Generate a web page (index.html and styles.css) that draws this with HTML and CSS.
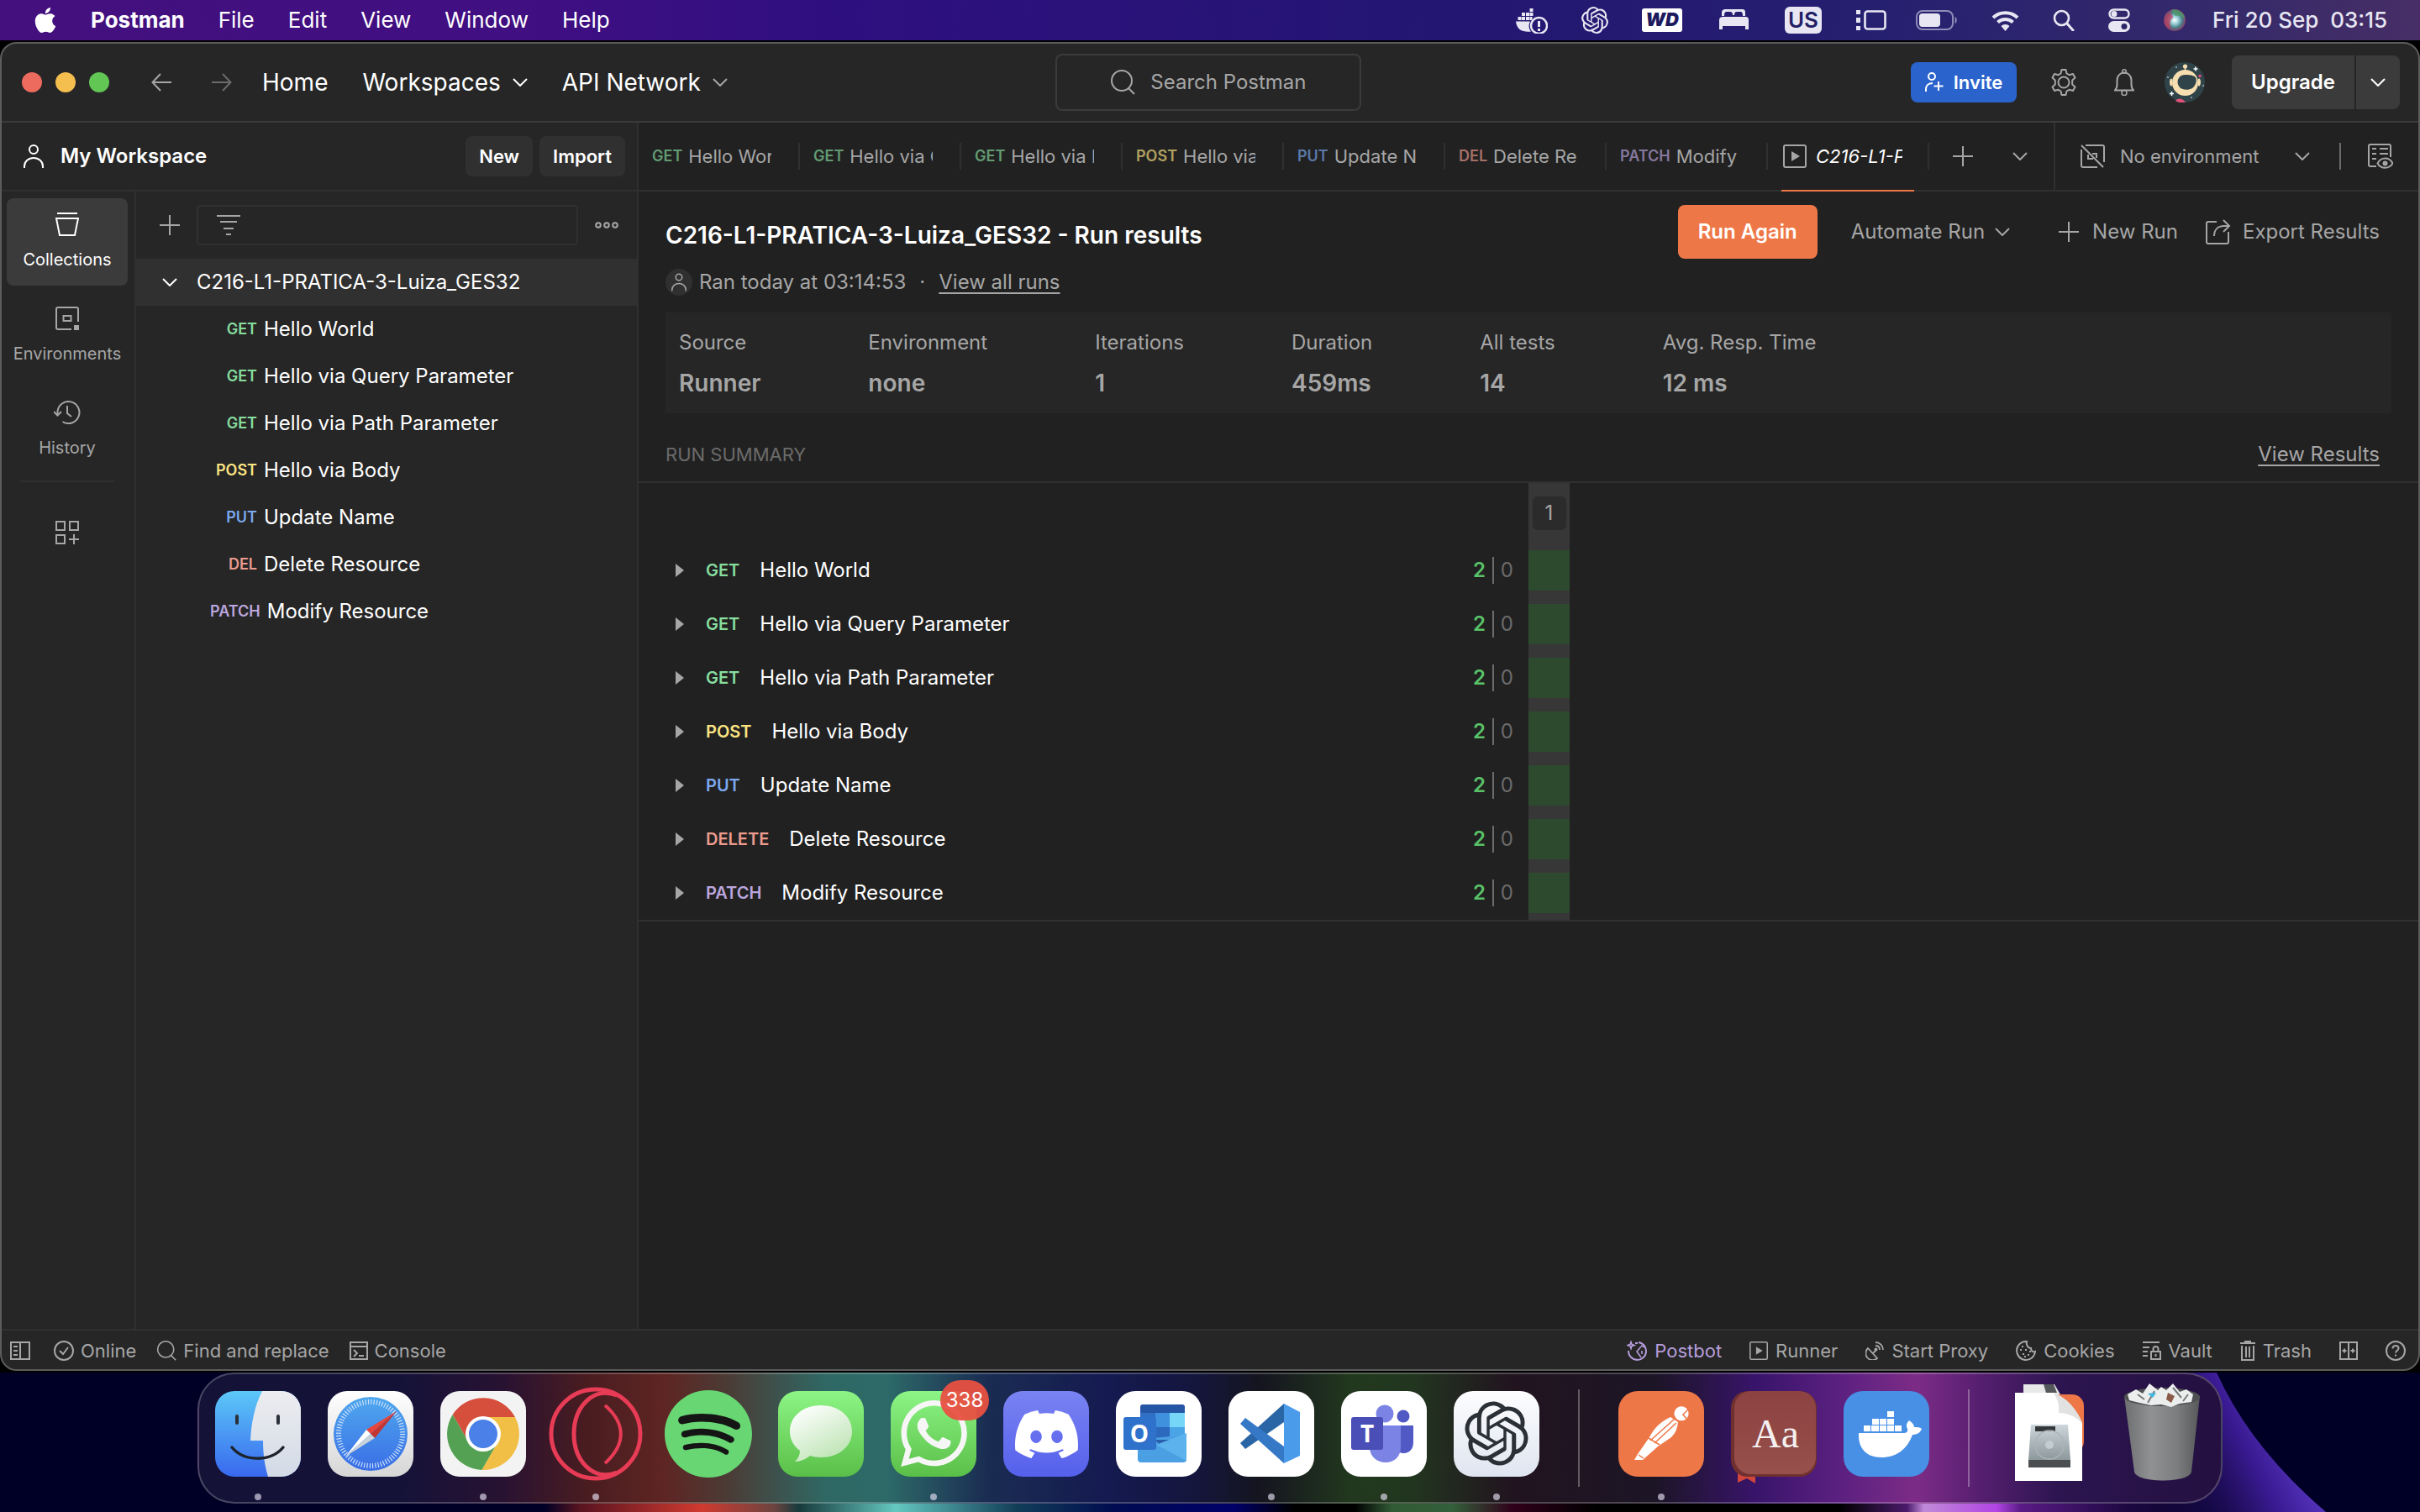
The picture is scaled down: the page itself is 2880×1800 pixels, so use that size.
FILE: index.html
```html
<!DOCTYPE html>
<html lang="en">
<head>
<meta charset="utf-8">
<title>Postman</title>
<link rel="stylesheet" href="styles.css">
</head>
<body>
<svg class="defs" aria-hidden="true">
  <defs>
    <symbol id="chevron" viewBox="0 0 18 10"><path d="M1 1l8 8 8-8" fill="none" stroke="currentColor" stroke-width="2"/></symbol>
    <symbol id="plus" viewBox="0 0 24 24"><path d="M12 0v24M0 12h24" fill="none" stroke="currentColor" stroke-width="2"/></symbol>
    <symbol id="person" viewBox="0 0 24 28"><circle cx="12" cy="6" r="5" fill="none" stroke="currentColor" stroke-width="2"/><path d="M1 28v-2c0-6 5-10 11-10s11 4 11 10v2" fill="none" stroke="currentColor" stroke-width="2"/></symbol>
    <symbol id="search" viewBox="0 0 30 30"><circle cx="14" cy="13" r="12" fill="none" stroke="currentColor" stroke-width="2"/><path d="M22 22l7 7" stroke="currentColor" stroke-width="2"/></symbol>
    <symbol id="play" viewBox="0 0 28 28"><rect x="1" y="1" width="26" height="26" rx="2" fill="none" stroke="currentColor" stroke-width="2"/><path d="M10 8l10 6-10 6z" fill="currentColor"/></symbol>
    <symbol id="openai" viewBox="0 0 24 24"><path fill="currentColor" d="M22.2819 9.8211a5.9847 5.9847 0 0 0-.5157-4.9108 6.0462 6.0462 0 0 0-6.5098-2.9A6.0651 6.0651 0 0 0 4.9807 4.1818a5.9847 5.9847 0 0 0-3.9977 2.9 6.0462 6.0462 0 0 0 .7427 7.0966 5.98 5.98 0 0 0 .511 4.9107 6.051 6.051 0 0 0 6.5146 2.9001A5.9847 5.9847 0 0 0 13.2599 24a6.0557 6.0557 0 0 0 5.7718-4.2058 5.9894 5.9894 0 0 0 3.9977-2.9001 6.0557 6.0557 0 0 0-.7475-7.0729zm-9.022 12.6081a4.4755 4.4755 0 0 1-2.8764-1.0408l.1419-.0804 4.7783-2.7582a.7948.7948 0 0 0 .3927-.6813v-6.7369l2.02 1.1686a.071.071 0 0 1 .038.052v5.5826a4.504 4.504 0 0 1-4.4945 4.4944zm-9.6607-4.1254a4.4708 4.4708 0 0 1-.5346-3.0137l.142.0852 4.783 2.7582a.7712.7712 0 0 0 .7806 0l5.8428-3.3685v2.3324a.0804.0804 0 0 1-.0332.0615L9.74 19.9502a4.4992 4.4992 0 0 1-6.1408-1.6464zM2.3408 7.8956a4.485 4.485 0 0 1 2.3655-1.9728V11.6a.7664.7664 0 0 0 .3879.6765l5.8144 3.3543-2.0201 1.1685a.0757.0757 0 0 1-.071 0l-4.8303-2.7865A4.504 4.504 0 0 1 2.3408 7.872zm16.5963 3.8558L13.1038 8.364 15.1192 7.2a.0757.0757 0 0 1 .071 0l4.8303 2.7913a4.4944 4.4944 0 0 1-.6765 8.1042v-5.6772a.79.79 0 0 0-.407-.667zm2.0107-3.0231l-.142-.0852-4.7735-2.7818a.7759.7759 0 0 0-.7854 0L9.409 9.2297V6.8974a.0662.0662 0 0 1 .0284-.0615l4.8303-2.7866a4.4992 4.4992 0 0 1 6.6802 4.66zM8.3065 12.863l-2.02-1.1638a.0804.0804 0 0 1-.038-.0567V6.0742a4.4992 4.4992 0 0 1 7.3757-3.4537l-.142.0805L8.704 5.459a.7948.7948 0 0 0-.3927.6813zm1.0976-2.3654l2.602-1.4998 2.6069 1.4998v2.9994l-2.5974 1.4997-2.6067-1.4997Z"/></symbol>
    <linearGradient id="g-finder" x2="0" y2="1"><stop stop-color="#5cc8f8"/><stop offset="1" stop-color="#3868ee"/></linearGradient>
    <linearGradient id="g-face" x2="0" y2="1"><stop stop-color="#ededf0"/><stop offset="1" stop-color="#d2dae6"/></linearGradient>
    <linearGradient id="g-white" x2="0" y2="1"><stop stop-color="#ffffff"/><stop offset="1" stop-color="#d6d6d6"/></linearGradient>
    <linearGradient id="g-blue" x2="0" y2="1"><stop stop-color="#4fa8ee"/><stop offset="1" stop-color="#3a6ee6"/></linearGradient>
    <linearGradient id="g-green" x2="0" y2="1"><stop stop-color="#8cf585"/><stop offset="1" stop-color="#5abf48"/></linearGradient>
    <linearGradient id="g-bubble" x1="0.2" x2="0.8" y2="1"><stop stop-color="#ffffff"/><stop offset="1" stop-color="#b9e2af"/></linearGradient>
    <linearGradient id="g-discord" x2="0" y2="1"><stop stop-color="#7a83f2"/><stop offset="1" stop-color="#5560ec"/></linearGradient>
    <linearGradient id="g-gpt" x2="0" y2="1"><stop stop-color="#fdfdfe"/><stop offset="1" stop-color="#dfe5f0"/></linearGradient>
    <linearGradient id="g-dict" x2="0" y2="1"><stop stop-color="#8c4241"/><stop offset="1" stop-color="#97504b"/></linearGradient>
    <linearGradient id="g-bin"><stop stop-color="#6c6e70"/><stop offset="0.35" stop-color="#8f9193"/><stop offset="0.7" stop-color="#7b7d7f"/><stop offset="1" stop-color="#56585a"/></linearGradient>
    <linearGradient id="g-disk" x2="0" y2="1"><stop stop-color="#cdd6da"/><stop offset="1" stop-color="#8d989c"/></linearGradient>
    <linearGradient id="g-edge" gradientUnits="userSpaceOnUse" x1="2520" y1="100" x2="2700" y2="10"><stop stop-color="#150838" stop-opacity="0"/><stop offset="0.7" stop-color="#3a1a92"/><stop offset="1" stop-color="#5a38c4"/></linearGradient>
    <radialGradient id="g-siri"><stop stop-color="#ffffff"/><stop offset="0.35" stop-color="#9ad0d8"/><stop offset="0.7" stop-color="#4a7f88"/><stop offset="1" stop-color="#8a3c6a"/></radialGradient>
  </defs>
</svg>

<header class="menubar">
  <nav class="menus" aria-label="Application menu">
    <svg class="apple" width="28" height="30" viewBox="1 0 22 24"><path fill="#fff" d="M12.152 6.896c-.948 0-2.415-1.078-3.96-1.04-2.04.027-3.91 1.183-4.961 3.014-2.117 3.675-.546 9.103 1.519 12.09 1.013 1.454 2.208 3.09 3.792 3.039 1.52-.065 2.09-.987 3.935-.987 1.831 0 2.35.987 3.96.948 1.637-.026 2.676-1.48 3.676-2.948 1.156-1.688 1.636-3.325 1.662-3.415-.039-.013-3.182-1.221-3.22-4.857-.026-3.04 2.48-4.494 2.597-4.559-1.429-2.09-3.623-2.324-4.39-2.376-2-.156-3.675 1.09-4.61 1.09zM15.53 3.83c.843-1.012 1.4-2.427 1.245-3.83-1.207.052-2.662.805-3.532 1.818-.78.896-1.454 2.338-1.273 3.714 1.338.104 2.715-.688 3.559-1.701"/></svg>
    <button class="menu menu-app">Postman</button>
    <button class="menu">File</button>
    <button class="menu">Edit</button>
    <button class="menu">View</button>
    <button class="menu">Window</button>
    <button class="menu">Help</button>
  </nav>
  <div class="status">
    <svg width="38" height="32" viewBox="0 0 38 32"><g fill="#e8e6f2"><path d="M16.500 2h4v4h-4zM7 7h4v4H7zM12 7h4v4h-4zM16.500 7h4v4h-4zM2.500 12h4v4h-4zM7 12h4v4H7zM12 12h4v4h-4zM16.500 12h3v4h-3zM0 17.500h17c-2 4-2 8 1 12-10 1-17-2-18-12z"/></g><circle cx="27.500" cy="22.500" r="9.500" fill="none" stroke="#e8e6f2" stroke-width="2.400"/><path d="M27.500 17v7M27.500 26v3" stroke="#e8e6f2" stroke-width="3"/></svg>
    <svg class="light" width="32" height="32"><use href="#openai"/></svg>
    <svg width="48" height="28" viewBox="0 0 48 28"><rect width="48" height="28" rx="3" fill="#fff"/><text x="24" y="21" text-anchor="middle" class="wd">WD</text></svg>
    <svg width="42" height="28" viewBox="-4 0 42 28"><path fill="#e8e6f2" d="M3 9V5c0-3 2-4 4-4h20c3 0 4 1 4 4v4h-3c0-4-1-5-3-5h-4c-2 0-3 1-3 4h-2c0-3-1-4-3-4H9C7 4 6 5 6 9zM0 25V14c0-3 2-4 4-4h27c3 0 4 1 4 4v11h-4v-4H4v4z"/></svg>
    <span class="input-source">US</span>
    <svg class="spill" width="32" height="24" viewBox="0 0 32 24"><path fill="#e8e6f2" d="M1 0h5v5H1zM1 9h5v6H1zM1 19h5v5H1z"/><rect x="11.500" y="1.500" width="24" height="21" rx="3" fill="none" stroke="#e8e6f2" stroke-width="2.600"/></svg>
    <svg width="50" height="24" viewBox="0 0 50 24"><rect x="1" y="1" width="43" height="22" rx="7" fill="none" stroke="#8f8bb8" stroke-width="2"/><rect x="4" y="4" width="25" height="16" rx="4" fill="#e8e6f2"/><path d="M46.500 8c3 1 3 7 0 8z" fill="#8f8bb8"/></svg>
    <svg width="33" height="25" viewBox="0 0 33 25"><path d="M2 9a21 21 0 0 1 29 0M7.500 14.500a13 13 0 0 1 18 0" fill="none" stroke="#e8e6f2" stroke-width="4"/><path d="M11.500 19a7 7 0 0 1 10 0l-5 6z" fill="#e8e6f2"/></svg>
    <svg width="26" height="26" viewBox="0 0 26 26"><circle cx="10.500" cy="10.500" r="8.500" fill="none" stroke="#e8e6f2" stroke-width="2.600"/><path d="M17 17l7 8" stroke="#e8e6f2" stroke-width="3" stroke-linecap="round"/></svg>
    <svg width="26" height="28" viewBox="0 0 26 28"><rect x="1.500" y="1.500" width="23" height="10" rx="5" fill="none" stroke="#e8e6f2" stroke-width="2.400"/><circle cx="7" cy="6.500" r="3.500" fill="#e8e6f2"/><rect y="15" width="26" height="13" rx="6.500" fill="#e8e6f2"/><circle cx="19" cy="21.500" r="3.500" fill="#2b2568"/></svg>
    <svg width="26" height="28" viewBox="0 0 26 28"><circle cx="13" cy="14" r="13" fill="url(#g-siri)"/><path d="M1 14c2-9 8-12 10-3-4 3-4 8-2 13C3 23 0 19 1 14z" fill="#c8365c" opacity=".7"/><path d="M9 2c8-3 16 4 16 10-4-3-8-4-11-3z" fill="#4c9a68" opacity=".8"/></svg>
    <time class="clock">Fri 20 Sep&nbsp; 03:15</time>
  </div>
</header>

<div class="window">
  <header class="titlebar">
    <div class="lights"><span class="light-close"></span><span class="light-min"></span><span class="light-max"></span></div>
    <button class="icon-btn back" aria-label="Back"><svg width="24" height="22" viewBox="0 0 24 22"><path d="M24 11H2M11 1L1.500 11l9.500 10" fill="none" stroke="currentColor" stroke-width="2"/></svg></button>
    <button class="icon-btn forward" aria-label="Forward"><svg width="24" height="22" viewBox="0 0 24 22"><path d="M0 11h22M13 1l9.500 10L13 21" fill="none" stroke="currentColor" stroke-width="2"/></svg></button>
    <nav class="topnav">
      <button>Home</button>
      <button>Workspaces <svg width="18" height="10"><use href="#chevron"/></svg></button>
      <button>API Network <svg class="muted" width="18" height="10"><use href="#chevron"/></svg></button>
    </nav>
    <div class="search-slot"><button class="search"><svg width="30" height="30"><use href="#search"/></svg>Search Postman</button></div>
    <div class="account">
      <button class="invite"><svg width="22" height="24" viewBox="0 0 22 24"><circle cx="8" cy="5" r="4" fill="none" stroke="#fff" stroke-width="2"/><path d="M1 23v-3c0-4 3-7 8-7M16 11v11M10.500 16.500h11" fill="none" stroke="#fff" stroke-width="2"/></svg>Invite</button>
      <button class="icon-btn gear" aria-label="Settings"><svg width="32" height="32" viewBox="0 0 32 32"><path d="M13.500 1h5l1 4.500 3 1.700L27 6l2.500 4.500-3.300 3v5l3.300 3L27 26l-4.500-1.200-3 1.700-1 4.500h-5l-1-4.500-3-1.700L5 26l-2.500-4.500 3.300-3v-5l-3.300-3L5 6l4.500 1.200 3-1.700z" fill="none" stroke="currentColor" stroke-width="2" stroke-linejoin="round"/><circle cx="16" cy="16" r="6.500" fill="none" stroke="currentColor" stroke-width="2"/></svg></button>
      <button class="icon-btn bell" aria-label="Notifications"><svg width="24" height="32" viewBox="0 0 24 32"><path d="M1 25.500c2-2 2.500-4 2.500-7v-5c0-5 3.500-9 8.500-9s8.500 4 8.500 9v5c0 3 .5 5 2.500 7z" fill="none" stroke="currentColor" stroke-width="2"/><circle cx="12" cy="3" r="2.200" fill="none" stroke="currentColor" stroke-width="1.600"/><circle cx="12" cy="28.500" r="3" fill="none" stroke="currentColor" stroke-width="1.600"/></svg></button>
      <svg class="avatar" width="48" height="48" viewBox="0 0 48 48"><circle cx="24" cy="24" r="24" fill="#2f4348"/><circle cx="24.500" cy="5" r="2.600" fill="#f7deb0"/><path d="M24.500 5v6" stroke="#f7deb0" stroke-width="1.500"/><circle cx="24.500" cy="24.500" r="15.500" fill="#f7deb0"/><path d="M8 20q-2 4 0 8zM41 20q2 4 0 8z" fill="#f7deb0" stroke="#f7deb0" stroke-width="2"/><path d="M20 16c5-2 14-1 17 2 2 4 0 10-4 13-5 3-12 2-15-1-4-5-3-11 2-14z" fill="#2f4348"/><path d="M13 46c3-4 9-3 12 2-5 1-9 0-12-2z" fill="#e0527a"/><circle cx="42" cy="16.500" r="1.700" fill="#e0527a"/><path d="M37 5.500v5M34.500 8h5M8.500 35v5M6 37.500h5" stroke="#fff" stroke-width="1.600"/><circle cx="14" cy="6" r="1" fill="#9fb0b4"/><circle cx="4" cy="18" r=".8" fill="#fff"/><circle cx="46" cy="28" r=".8" fill="#fff"/><circle cx="32" cy="42" r=".8" fill="#fff"/></svg>
      <div class="upgrade"><button>Upgrade</button><button class="upgrade-more" aria-label="Upgrade options"><svg width="18" height="10"><use href="#chevron"/></svg></button></div>
    </div>
  </header>

  <div class="workarea">
    <aside class="sidebar">
      <div class="workspace">
        <svg width="24" height="28"><use href="#person"/></svg>
        <h2>My Workspace</h2>
        <button class="small-btn">New</button>
        <button class="small-btn">Import</button>
      </div>
      <div class="side-body">
        <nav class="rail">
          <button class="rail-item active"><svg width="28" height="28" viewBox="0 0 28 28"><path d="M2 1h24" stroke="currentColor" stroke-width="2"/><path d="M1 7h26l-4 20H5z" fill="none" stroke="currentColor" stroke-width="2"/></svg>Collections</button>
          <button class="rail-item"><svg width="28" height="28" viewBox="0 0 28 28"><path d="M19 27H3a2 2 0 0 1-2-2V3a2 2 0 0 1 2-2h22a2 2 0 0 1 2 2v15" fill="none" stroke="currentColor" stroke-width="2"/><rect x="9.500" y="11" width="9" height="6" fill="none" stroke="currentColor" stroke-width="2"/><path d="M22 22h6v6h-6z" fill="currentColor"/></svg>Environments</button>
          <button class="rail-item"><svg width="32" height="28" viewBox="0 0 32 28"><path d="M4.500 17V13a13 13 0 1 1 6 12" fill="none" stroke="currentColor" stroke-width="2"/><path d="M0 13l4.500 4.500L9 13M16 6v9l5 4" fill="none" stroke="currentColor" stroke-width="2"/></svg>History</button>
          <hr>
          <button class="rail-more" aria-label="Configure sidebar"><svg width="28" height="28" viewBox="0 0 28 28"><path d="M1 1h10v10H1zM17 1h10v10H17zM1 17h10v10H1zM22 16v12M16 22h12" fill="none" stroke="currentColor" stroke-width="2"/></svg></button>
        </nav>
        <section class="collections">
          <div class="filter-row">
            <button class="icon-btn" aria-label="Create collection"><svg width="24" height="24"><use href="#plus"/></svg></button>
            <label class="filter"><svg width="28" height="24" viewBox="0 0 28 24"><path d="M0 1h28M4 8h20M8 16h12M11 23h6" stroke="currentColor" stroke-width="2"/></svg><input type="text" aria-label="Filter collections"></label>
            <button class="icon-btn" aria-label="More actions"><svg width="28" height="8" viewBox="0 0 28 8"><g fill="none" stroke="currentColor" stroke-width="2"><circle cx="4" cy="4" r="2.800"/><circle cx="14" cy="4" r="2.800"/><circle cx="24" cy="4" r="2.800"/></g></svg></button>
          </div>
          <button class="tree-root"><svg width="18" height="10"><use href="#chevron"/></svg>C216-L1-PRATICA-3-Luiza_GES32</button>
          <ul class="tree">
            <li><button><span class="method get">GET</span>Hello World</button></li>
            <li><button><span class="method get">GET</span>Hello via Query Parameter</button></li>
            <li><button><span class="method get">GET</span>Hello via Path Parameter</button></li>
            <li><button><span class="method post">POST</span>Hello via Body</button></li>
            <li><button><span class="method put">PUT</span>Update Name</button></li>
            <li><button><span class="method del">DEL</span>Delete Resource</button></li>
            <li><button><span class="method patch">PATCH</span>Modify Resource</button></li>
          </ul>
        </section>
      </div>
    </aside>

    <main class="main">
      <div class="tabbar">
        <div class="tabs">
          <button class="tab"><span><b class="method get">GET</b>Hello Wor</span></button>
          <button class="tab"><span><b class="method get">GET</b>Hello via Q</span></button>
          <button class="tab"><span><b class="method get">GET</b>Hello via P</span></button>
          <button class="tab"><span><b class="method post">POST</b>Hello via</span></button>
          <button class="tab"><span><b class="method put">PUT</b>Update N</span></button>
          <button class="tab"><span><b class="method del">DEL</b>Delete Re</span></button>
          <button class="tab"><span><b class="method patch">PATCH</b>Modify</span></button>
          <button class="tab current"><span><svg width="28" height="28"><use href="#play"/></svg><i>C216-L1-P</i></span></button>
        </div>
        <button class="icon-btn tab-add" aria-label="New tab"><svg width="24" height="24"><use href="#plus"/></svg></button>
        <button class="icon-btn tab-list" aria-label="Tab list"><svg width="18" height="10"><use href="#chevron"/></svg></button>
        <div class="environment">
          <button class="env-select"><svg width="30" height="28" viewBox="0 0 30 28"><path d="M6 1h20a2 2 0 0 1 2 2v18M20 27H3a2 2 0 0 1-2-2V6" fill="none" stroke="currentColor" stroke-width="2"/><path d="M1 1l26 26M14 11h5v5M9 12v5h6" fill="none" stroke="currentColor" stroke-width="2"/></svg><span>No environment</span><svg width="18" height="10"><use href="#chevron"/></svg></button>
          <button class="icon-btn env-view" aria-label="Environment quick look"><svg width="30" height="30" viewBox="0 0 30 30"><path d="M10 27H3a2 2 0 0 1-2-2V3a2 2 0 0 1 2-2h22a2 2 0 0 1 2 2v13M5 6h5M14 6h10M5 12h5M14 12h10M5 18h5" fill="none" stroke="currentColor" stroke-width="2"/><path d="M11.500 23.500c4-8 14-8 18 0-4 7-14 7-18 0z" fill="none" stroke="currentColor" stroke-width="2"/><circle cx="20.500" cy="23.500" r="3" fill="currentColor"/></svg></button>
        </div>
      </div>

      <section class="results">
        <div class="results-head">
          <h1>C216-L1-PRATICA-3-Luiza_GES32 - Run results</h1>
          <button class="run-again">Run Again</button>
          <button class="text-btn automate">Automate Run <svg width="18" height="10"><use href="#chevron"/></svg></button>
          <button class="text-btn new-run"><svg width="24" height="24"><use href="#plus"/></svg>New Run</button>
          <button class="text-btn export"><svg width="30" height="30" viewBox="0 0 30 30"><path d="M13 3H3a2 2 0 0 0-2 2v22a2 2 0 0 0 2 2h22a2 2 0 0 0 2-2V15" fill="none" stroke="currentColor" stroke-width="2"/><path d="M10 20c0-7 4-12 12-12h6M21 1l7 7-7 7" fill="none" stroke="currentColor" stroke-width="2"/></svg>Export Results</button>
        </div>
        <p class="ran"><span class="ran-avatar"><svg width="18" height="22"><use href="#person"/></svg></span>Ran today at 03:14:53<span class="dot">·</span><a href="#runs">View all runs</a></p>
        <dl class="metrics">
          <div><dt>Source</dt><dd>Runner</dd></div>
          <div><dt>Environment</dt><dd>none</dd></div>
          <div><dt>Iterations</dt><dd>1</dd></div>
          <div><dt>Duration</dt><dd>459ms</dd></div>
          <div><dt>All tests</dt><dd>14</dd></div>
          <div><dt>Avg. Resp. Time</dt><dd>12 ms</dd></div>
        </dl>
        <div class="summary-head"><h3>RUN SUMMARY</h3><a href="#results">View Results</a></div>
        <table class="summary">
          <thead><tr><td></td><th class="iter" scope="col"><span>1</span></th><td></td></tr></thead>
          <tbody>
            <tr><td><div class="request"><i class="caret"></i><b class="get">GET</b>Hello World<span class="pass">2</span><span class="fail">0</span></div></td><td class="iter"><div class="ok"></div></td><td></td></tr>
            <tr><td><div class="request"><i class="caret"></i><b class="get">GET</b>Hello via Query Parameter<span class="pass">2</span><span class="fail">0</span></div></td><td class="iter"><div class="ok"></div></td><td></td></tr>
            <tr><td><div class="request"><i class="caret"></i><b class="get">GET</b>Hello via Path Parameter<span class="pass">2</span><span class="fail">0</span></div></td><td class="iter"><div class="ok"></div></td><td></td></tr>
            <tr><td><div class="request"><i class="caret"></i><b class="post">POST</b>Hello via Body<span class="pass">2</span><span class="fail">0</span></div></td><td class="iter"><div class="ok"></div></td><td></td></tr>
            <tr><td><div class="request"><i class="caret"></i><b class="put">PUT</b>Update Name<span class="pass">2</span><span class="fail">0</span></div></td><td class="iter"><div class="ok"></div></td><td></td></tr>
            <tr><td><div class="request"><i class="caret"></i><b class="del">DELETE</b>Delete Resource<span class="pass">2</span><span class="fail">0</span></div></td><td class="iter"><div class="ok"></div></td><td></td></tr>
            <tr><td><div class="request"><i class="caret"></i><b class="patch">PATCH</b>Modify Resource<span class="pass">2</span><span class="fail">0</span></div></td><td class="iter"><div class="ok"></div></td><td></td></tr>
          </tbody>
        </table>
      </section>
    </main>
  </div>

  <footer class="statusbar">
    <div class="foot-left">
      <button class="toggle" aria-label="Toggle sidebar"><svg width="24" height="22" viewBox="0 0 24 22"><path d="M1 1h22v20H1zM12 1v20M4 6h5M4 11h5M4 16h5" fill="none" stroke="currentColor" stroke-width="2"/></svg></button>
      <button><svg width="24" height="24" viewBox="0 0 24 24"><circle cx="12" cy="12" r="11" fill="none" stroke="currentColor" stroke-width="2"/><path d="M7 12l4 4 6-8" fill="none" stroke="currentColor" stroke-width="2"/></svg>Online</button>
      <button><svg width="24" height="24"><use href="#search"/></svg>Find and replace</button>
      <button><svg width="22" height="22" viewBox="0 0 22 22"><path d="M1 1h20v20H1zM1 6h20M5 10l4 4-4 4M11 17h6" fill="none" stroke="currentColor" stroke-width="2"/></svg>Console</button>
    </div>
    <div class="foot-right">
      <button class="postbot"><svg width="24" height="24" viewBox="0 0 24 24"><path d="M14 2a10.500 10.500 0 1 1-12 10M10 3h3" fill="none" stroke="currentColor" stroke-width="2"/><path d="M5 1.500l1 3 3 1-3 1-1 3-1-3-3-1 3-1zM17 7l-5 6 5 7M18 12v4M22 8l-5-2" fill="none" stroke="currentColor" stroke-width="1.600"/></svg>Postbot</button>
      <button><svg width="22" height="22"><use href="#play"/></svg>Runner</button>
      <button><svg width="22" height="22" viewBox="0 0 22 22"><path d="M3 8a8 8 0 0 0 11 12zM9 14l4-4M12 5c3 0 5 2 5 5M12 1c5 0 9 4 9 9" fill="none" stroke="currentColor" stroke-width="1.800"/><circle cx="12.500" cy="9.500" r="2" fill="currentColor"/></svg>Start Proxy</button>
      <button><svg width="24" height="24" viewBox="0 0 24 24"><path d="M13 1a11 11 0 1 0 10 12c-3 1-5-1-5-4-3 0-6-3-5-8z" fill="none" stroke="currentColor" stroke-width="2"/><path d="M8 6v2M5 11h2M11 11h2M8 16h2M14 17h2M16 13h2M10 19h2" stroke="currentColor" stroke-width="2"/></svg>Cookies</button>
      <button><svg width="22" height="22" viewBox="0 0 22 22"><path d="M0 1h20M0 7h8M0 12h6M0 17h6" stroke="currentColor" stroke-width="2"/><path d="M10 12h11v9H10zM12.500 12V9c0-4 6-4 6 0v3M15.500 15v3" fill="none" stroke="currentColor" stroke-width="2"/></svg>Vault</button>
      <button><svg width="18" height="24" viewBox="0 0 18 24"><path d="M0 3h18M6 3V1h6v2M2 6v17h14V6M7 7v13M11 7v13" fill="none" stroke="currentColor" stroke-width="2"/></svg>Trash</button>
      <button aria-label="Two pane view"><svg width="22" height="22" viewBox="0 0 22 22"><path d="M1 1h20v20H1zM11 1v20M3.500 11h5M13.500 11h5M16 8.500v5M6 8.500v5" fill="none" stroke="currentColor" stroke-width="2"/></svg></button>
      <button aria-label="Help"><svg width="24" height="24" viewBox="0 0 24 24"><circle cx="12" cy="12" r="11" fill="none" stroke="currentColor" stroke-width="2"/><path d="M8.500 9.500c0-5 7-4.500 7-.5 0 3-3.500 3-3.500 5.500M12 16.500v2" fill="none" stroke="currentColor" stroke-width="2"/></svg></button>
    </div>
  </footer>
</div>

<div class="desktop">
  <svg class="wallpaper" viewBox="0 0 2880 168" preserveAspectRatio="none" aria-hidden="true">
    <path d="M2500 0h138q40 90 130 168h-340z" fill="url(#g-edge)"/>
  </svg>
  <nav class="dock" aria-label="Dock">
    <button class="app running" aria-label="Finder"><svg viewBox="0 0 102 102"><clipPath id="clip"><rect width="102" height="102" rx="23"/></clipPath><g clip-path="url(#clip)"><path fill="url(#g-finder)" d="M0 0h102v102H0z"/><path fill="url(#g-face)" d="M56 0C47 18 43 38 42 59h15c0 16 2 30 6 43h40V0z"/></g><path d="M26 30v8M75 30v8" stroke="#2b2f38" stroke-width="4" stroke-linecap="round"/><path d="M20 67c14 17 46 18 61 0" fill="none" stroke="#1d222b" stroke-width="3.500" stroke-linecap="round"/></svg></button>
    <button class="app" aria-label="Safari"><svg viewBox="0 0 102 102"><rect width="102" height="102" rx="23" fill="url(#g-white)"/><circle cx="51" cy="51" r="44" fill="url(#g-blue)"/><circle cx="51" cy="51" r="38" fill="none" stroke="#d4e6fb" stroke-width="6" stroke-dasharray="1.100 2.217"/><path d="M82 24L46 46l5 5z" fill="#e8453c"/><path d="M82 24L56 56l-5-5z" fill="#c23530"/><path d="M21 78l25-32 5 5z" fill="#fff"/><path d="M21 78l35-22-5-5z" fill="#c9d2da"/></svg></button>
    <button class="app running" aria-label="Chrome"><svg viewBox="0 0 102 102"><rect width="102" height="102" rx="23" fill="#f3f3f3"/><path d="M14.700 28.100A43 43 0 0 1 89 31H51L33.700 61z" fill="#d64e3c"/><path d="M89 31A43 43 0 0 1 49.300 94L68.300 61 51 31z" fill="#f1be46"/><path d="M49.300 94A43 43 0 0 1 14.700 28.100L33.700 61h34.600z" fill="#55a153"/><circle cx="51" cy="51" r="21" fill="#fff"/><circle cx="51" cy="51" r="17" fill="#4a80e8"/></svg></button>
    <button class="app running" aria-label="Opera GX"><svg viewBox="0 0 102 102"><g fill="none" stroke="#e83b56" stroke-width="5"><circle cx="51" cy="51" r="53"/><path d="M76 5C47-6 25 20 25 51s22 57 51 46"/><path d="M62 17c25 22 25 46 0 69" stroke-width="4"/></g></svg></button>
    <button class="app" aria-label="Spotify"><svg viewBox="0 0 102 102"><circle cx="51" cy="51" r="50" fill="#151515"/><svg x="-1" y="-1" width="104" height="104" viewBox="0 0 24 24"><path fill="#67d673" d="M12 0C5.400 0 0 5.400 0 12s5.400 12 12 12 12-5.400 12-12S18.660 0 12 0zm5.521 17.340c-.24.359-.66.48-1.021.24-2.820-1.740-6.360-2.101-10.561-1.141-.418.122-.779-.179-.899-.539-.12-.421.18-.78.54-.9 4.560-1.021 8.520-.6 11.640 1.320.42.18.479.659.301 1.020zm1.440-3.300c-.301.42-.841.6-1.262.3-3.239-1.980-8.159-2.580-11.939-1.380-.479.12-1.020-.12-1.140-.6-.12-.48.12-1.021.6-1.141C9.600 9.900 15 10.561 18.720 12.840c.361.181.54.78.241 1.200zm.12-3.360C15.240 8.400 8.820 8.160 5.160 9.301c-.6.179-1.200-.181-1.380-.721-.18-.601.18-1.200.72-1.381 4.260-1.260 11.280-1.020 15.721 1.621.539.3.719 1.020.419 1.560-.299.421-1.020.599-1.559.3z"/></svg></svg></button>
    <button class="app" aria-label="Messages"><svg viewBox="0 0 102 102"><rect width="102" height="102" rx="23" fill="url(#g-green)"/><path d="M51 17c21 0 37 13 37 31S72 79 51 79c-5 0-9-1-13-2-5 4-11 7-18 7 4-4 6-8 6-13-8-6-12-14-12-23 0-18 16-31 37-31z" fill="url(#g-bubble)"/></svg></button>
    <button class="app running" aria-label="WhatsApp"><svg viewBox="0 0 102 102"><rect width="102" height="102" rx="23" fill="url(#g-green)"/><svg x="12" y="11" width="79" height="79" viewBox="0 0 24 24"><path fill="#f6f6f6" d="M17.472 14.382c-.297-.149-1.758-.867-2.030-.967-.273-.099-.471-.148-.67.15-.197.297-.767.966-.94 1.164-.173.199-.347.223-.644.075-.297-.15-1.255-.463-2.390-1.475-.883-.788-1.480-1.761-1.653-2.059-.173-.297-.018-.458.13-.606.134-.133.298-.347.446-.52.149-.174.198-.298.298-.497.099-.198.05-.371-.025-.52-.075-.149-.669-1.612-.916-2.207-.242-.579-.487-.5-.669-.51-.173-.008-.371-.01-.57-.01-.198 0-.52.074-.792.372-.272.297-1.040 1.016-1.040 2.479 0 1.462 1.065 2.875 1.213 3.074.149.198 2.096 3.200 5.077 4.487.709.306 1.262.489 1.694.625.712.227 1.360.195 1.871.118.571-.085 1.758-.719 2.006-1.413.248-.694.248-1.289.173-1.413-.074-.124-.272-.198-.57-.347m-5.421 7.403h-.004a9.870 9.870 0 01-5.031-1.378l-.361-.214-3.741.982.998-3.648-.235-.374a9.860 9.860 0 01-1.510-5.260c.001-5.450 4.436-9.884 9.888-9.884 2.640 0 5.122 1.030 6.988 2.898a9.825 9.825 0 012.893 6.994c-.003 5.450-4.437 9.884-9.885 9.884m8.413-18.297A11.815 11.815 0 0012.050 0C5.495 0 .16 5.335.157 11.892c0 2.096.547 4.142 1.588 5.945L.057 24l6.305-1.654a11.882 11.882 0 005.683 1.448h.005c6.554 0 11.890-5.335 11.893-11.893a11.821 11.821 0 00-3.480-8.413Z"/></svg></svg><span class="badge">338</span></button>
    <button class="app" aria-label="Discord"><svg viewBox="0 0 102 102"><rect width="102" height="102" rx="23" fill="url(#g-discord)"/><svg x="14" y="14" width="75" height="75" viewBox="0 0 24 24"><path fill="#fff" d="M20.317 4.370a19.791 19.791 0 00-4.885-1.515.074.074 0 00-.079.037c-.211.375-.445.865-.608 1.250-1.845-.276-3.680-.276-5.487 0-.164-.393-.406-.874-.618-1.250a.077.077 0 00-.079-.037 19.736 19.736 0 00-4.885 1.515.07.07 0 00-.032.028C.533 9.046-.319 13.580.099 18.058a.082.082 0 00.031.056c2.053 1.508 4.041 2.423 5.993 3.029a.078.078 0 00.084-.028c.462-.63.873-1.295 1.226-1.994a.076.076 0 00-.042-.106c-.653-.248-1.274-.55-1.872-.892a.077.077 0 01-.008-.128c.126-.094.252-.192.372-.291a.074.074 0 01.078-.011c3.928 1.793 8.180 1.793 12.061 0a.074.074 0 01.079.01c.12.099.246.198.373.292a.077.077 0 01-.007.128 12.299 12.299 0 01-1.873.891.077.077 0 00-.041.107c.36.698.772 1.363 1.225 1.993a.076.076 0 00.084.029c1.961-.607 3.950-1.522 6.002-3.029a.077.077 0 00.031-.055c.5-5.177-.838-9.674-3.549-13.660a.061.061 0 00-.031-.029zM8.020 15.331c-1.183 0-2.157-1.086-2.157-2.419 0-1.333.956-2.419 2.157-2.419 1.211 0 2.176 1.095 2.157 2.419 0 1.333-.956 2.419-2.157 2.419zm7.975 0c-1.183 0-2.157-1.086-2.157-2.419 0-1.333.955-2.419 2.157-2.419 1.211 0 2.176 1.095 2.157 2.419 0 1.333-.946 2.419-2.157 2.419Z"/></svg></svg></button>
    <button class="app" aria-label="Outlook"><svg viewBox="0 0 102 102"><rect width="102" height="102" rx="23" fill="#fff"/><path d="M32 16h47a3 3 0 0 1 3 3v7H29v-7a3 3 0 0 1 3-3z" fill="#2456a5"/><path d="M29 26h18v33H29z" fill="#2f6fc4"/><path d="M47 26h17v17H47z" fill="#3f91dd"/><path d="M64 26h18v17H64z" fill="#76d6f8"/><path d="M47 43h17v17H47z" fill="#2c68bd"/><path d="M64 43h18v17H64z" fill="#4ba4e6"/><path d="M26 58l58-6v29a4 4 0 0 1-4 4H30a4 4 0 0 1-4-4z" fill="#4ba0e3"/><path d="M46 58h27L59 70z" fill="#2a5fae"/><path d="M48 64l36 19V50z" fill="#5bb2ec"/><rect x="9" y="31" width="39" height="39" rx="3" fill="#2f72cc"/><text x="28" y="61" text-anchor="middle" class="glyph">O</text></svg></button>
    <button class="app running" aria-label="Visual Studio Code"><svg viewBox="0 0 102 102"><rect width="102" height="102" rx="23" fill="#fff"/><path d="M14 62l6 7 46-32V15z" fill="#2a66a6"/><path d="M14 39l6-7 46 34v20z" fill="#3579c6"/><path d="M66 15l19 10v52l-19 9z" fill="#4a9bea"/></svg></button>
    <button class="app running" aria-label="Teams"><svg viewBox="0 0 102 102"><rect width="102" height="102" rx="23" fill="#fff"/><circle cx="52" cy="27" r="10.500" fill="#7b83e4"/><circle cx="74" cy="30" r="7.500" fill="#5059c4"/><path d="M66 41h20v20c0 8-5 13-11 13-4 0-9-2-9-6z" fill="#5059c4"/><path d="M34 41h37v26c0 11-8 18-18 18s-19-7-19-18z" fill="#7b83e4"/><rect x="12" y="31" width="38" height="39" rx="3" fill="#4a4fb8"/><text x="31" y="61" text-anchor="middle" class="glyph">T</text></svg></button>
    <button class="app running" aria-label="ChatGPT"><svg viewBox="0 0 102 102"><rect width="102" height="102" rx="23" fill="url(#g-gpt)"/><svg x="13" y="12" width="76" height="77" color="#2b3036"><use href="#openai"/></svg></svg></button>
    <span class="dock-sep"></span>
    <button class="app running" aria-label="Postman"><svg viewBox="0 0 102 102"><rect width="102" height="102" rx="23" fill="#ee7747"/><path d="M68 22a8.500 8.500 0 1 1 9 13 8.500 8.500 0 0 1-9-13z" fill="#fff"/><path d="M62 31l9 6c-1 8-3 13-8 18L47 66 29 82H19l4-7 14-20c6-12 14-19 25-24z" fill="#fff"/><path d="M84 21l-7 7 4 5M67 33L38 59M69 38L43 62M36 56l13 8M24 76l6 4" stroke="#ee7747" stroke-width="1.500" fill="none"/></svg></button>
    <button class="app" aria-label="Dictionary"><svg viewBox="0 0 102 102"><path d="M8 94h21v16l-10-6-11 5z" fill="#d0453c"/><rect width="102" height="102" rx="20" fill="#6f302f"/><rect x="4" width="97" height="99" rx="20" fill="url(#g-dict)"/><text x="53" y="67" text-anchor="middle" class="aa">Aa</text></svg></button>
    <button class="app" aria-label="Docker"><svg viewBox="0 0 102 102"><rect width="102" height="102" rx="23" fill="#4790e6"/><path fill="#fff" d="M52 24h8v7h-8zM34 33h8v7h-8zM43 33h8v7h-8zM52 33h8v7h-8zM24 41h8v7h-8zM33 41h9v7h-9zM43 41h8v7h-8zM52 41h8v7h-8zM61 41h8v7h-8zM18 50h53c4 0 6-2 5-5-2-4-1-7 2-10 4 3 6 5 6 8 3 0 7 0 9 2-2 5-6 7-11 7-6 17-19 27-37 27-18 0-28-11-27-29z"/></svg></button>
    <span class="dock-sep"></span>
    <button class="app" aria-label="Downloads"><svg viewBox="0 0 102 102"><path d="M18-8h37l8 14H18z" fill="#e8e8e8"/><path d="M42-8h12l4 10H45z" fill="#55585a"/><rect x="8" y="4" width="82" height="70" rx="14" fill="#ee7747"/><path d="M8 2h46c14 8 28 20 34 36v69H8z" fill="#fff"/><path d="M54 2c5 8 7 16 6 24 10 0 20 4 28 12C82 22 70 8 54 2z" fill="#e2e2e2"/><path d="M27 40h44l3 42H24z" fill="url(#g-disk)"/><path d="M24 82h50v9H24z" fill="#4b4f52"/><path d="M32 42h24v6H32z" fill="#33383b"/><circle cx="49" cy="64" r="17" fill="none" stroke="#aab4b8" stroke-width="1.500"/><circle cx="49" cy="64" r="5" fill="#c3ccd0"/></svg></button>
    <button class="app" aria-label="Bin"><svg viewBox="0 0 102 102"><path d="M4 6h90l-10 90c-2 14-66 14-68 0z" fill="url(#g-bin)"/><ellipse cx="49" cy="7" rx="45" ry="11" fill="#4e5052"/><path d="M8 4l10-6 8 5 8-12 10 8 4-4 6 4 8-8 8 10 8-3 8 6-2 9-14 2-10 4-12-3-12 1-14-3-12-3z" fill="#eceded"/><path d="M20 4l8 6M62-4l10 12M40 0l-8 14M80 4l-6 8" stroke="#77797b" stroke-width="2"/><path d="M32 3l10-1-4 6z" fill="#3db8e0"/><path d="M56 2l8 4-4 8-6-4z" fill="#8a5a48"/></svg></button>
  </nav>
</div>
</body>
</html>
```
FILE: styles.css
```css
* { box-sizing: border-box; }

body {
  margin: 0;
  min-height: 100vh;
  display: flex;
  flex-direction: column;
  gap: 2px;
  background: #000;
  color: #fff;
  font: 24px/32px Inter, "Liberation Sans", sans-serif;
}

button {
  padding: 0;
  border: 0;
  background: none;
  color: inherit;
  font: inherit;
  white-space: nowrap;
}

svg { display: block; flex: none; }
h1, h2, h3, p, dl, dd, ul { margin: 0; padding: 0; }
.defs { position: absolute; width: 0; height: 0; }

.get { color: #86dd9e; }
.post { color: #fbe482; }
.put { color: #7ba8ee; }
.del { color: #ec9b8e; }
.patch { color: #bba6df; }

/* Menu bar */
.menubar {
  height: 48px;
  display: flex;
  justify-content: space-between;
  align-items: center;
  background: linear-gradient(90deg, #44107e, #400f82 22%, #2f0f80 34%, #231672 60%, #262070 78%, #352a6a 92%, #472e66);
  font-size: 26px;
}
.menus { display: flex; align-items: center; gap: 40px; padding-left: 40px; }
.menu-app { font-weight: 700; }
.status { display: flex; align-items: center; gap: 40px; padding-right: 31px; color: #e8e6f2; }
.spill { overflow: visible; }
.wd { font: italic 900 22px Inter, sans-serif; fill: #1d1a5e; }
.input-source {
  width: 44px;
  border-radius: 6px;
  background: #e8e6f2;
  color: #231f66;
  font-weight: 600;
  text-align: center;
}
.clock { width: 216px; margin-left: -8px; font-weight: 500; white-space: nowrap; }

/* Window */
.window {
  flex: 1;
  display: flex;
  flex-direction: column;
  border: 2px solid #5c5c5c;
  border-radius: 20px;
  overflow: hidden;
  background: #262626;
}
.titlebar {
  height: 94px;
  display: grid;
  grid-template-columns: auto auto auto auto 1fr auto;
  align-items: center;
  border-bottom: 2px solid #3b3b3b;
  padding: 0 22px 0 24px;
}
.lights { display: flex; gap: 16px; }
.lights span { width: 24px; height: 24px; border-radius: 50%; }
.light-close { background: #ed6a5f; }
.light-min { background: #f5bf4f; }
.light-max { background: #62c655; }
.icon-btn { display: flex; align-items: center; justify-content: center; color: #a6a6a6; }
.back { margin-left: 50px; }
.forward { margin-left: 48px; color: #6b6b6b; }
.topnav { display: flex; gap: 41px; margin-left: 36px; font-size: 28px; }
.topnav button { display: flex; align-items: center; gap: 14px; }
.muted { color: #a6a6a6; }
.search-slot { padding-left: 390px; }
.search {
  width: 364px;
  height: 68px;
  display: flex;
  align-items: center;
  justify-content: center;
  gap: 18px;
  border: 2px solid #3b3b3b;
  border-radius: 8px;
  color: #a6a6a6;
}
.account { display: flex; align-items: center; }
.invite {
  width: 126px;
  height: 48px;
  display: flex;
  align-items: center;
  justify-content: center;
  gap: 12px;
  border-radius: 8px;
  background: #2a63cc;
  font-size: 22px;
  font-weight: 600;
}
.gear { margin-left: 40px; }
.bell { margin-left: 44px; }
.avatar { margin-left: 36px; }
.upgrade { display: flex; gap: 2px; margin-left: 32px; font-weight: 600; }
.upgrade button { width: 146px; height: 64px; background: #3b3b3b; border-radius: 8px 0 0 8px; }
.upgrade .upgrade-more {
  width: 52px;
  display: flex;
  align-items: center;
  justify-content: center;
  border-radius: 0 8px 8px 0;
}

.workarea { flex: 1; display: grid; grid-template-columns: 758px minmax(0, 1fr); }

/* Sidebar */
.sidebar { display: flex; flex-direction: column; border-right: 2px solid #303030; }
.workspace {
  height: 82px;
  display: flex;
  align-items: center;
  gap: 8px;
  padding: 0 14px 0 26px;
  border-bottom: 2px solid #303030;
}
.workspace h2 { flex: 1; margin-left: 12px; font-size: 24px; font-weight: 600; }
.small-btn {
  height: 48px;
  padding: 0 16px;
  border-radius: 8px;
  background: #303030;
  font-size: 22px;
  font-weight: 600;
}
.side-body { flex: 1; display: flex; }
.rail {
  flex: none;
  width: 160px;
  display: flex;
  flex-direction: column;
  align-items: center;
  gap: 8px;
  padding: 8px 2px 0 0;
  border-right: 2px solid #303030;
  color: #a6a6a6;
  font-size: 20px;
}
.rail-item {
  width: 144px;
  height: 104px;
  display: flex;
  flex-direction: column;
  align-items: center;
  justify-content: center;
  gap: 12px;
  padding-top: 2px;
  border-radius: 8px;
}
.rail-item.active { background: #3b3b3b; color: #fff; }
.rail hr { width: 112px; margin: 0; border: 0; border-top: 2px solid #303030; }
.rail-more { margin-top: 38px; color: #a6a6a6; }
.collections { flex: 1; min-width: 0; }
.filter-row { display: flex; align-items: center; gap: 20px; padding: 16px 22px 16px 28px; color: #a6a6a6; }
.filter {
  flex: 1;
  min-width: 0;
  height: 48px;
  display: flex;
  align-items: center;
  gap: 12px;
  padding: 0 22px;
  border: 2px solid #303030;
  border-radius: 4px;
}
.filter input { flex: 1; min-width: 0; border: 0; background: none; color: #fff; font: inherit; outline: 0; }
.tree-root {
  width: 100%;
  height: 56px;
  display: flex;
  align-items: center;
  gap: 23px;
  padding-left: 31px;
  background: #303030;
}
.tree { list-style: none; }
.tree button { width: 100%; height: 56px; display: flex; align-items: center; gap: 8px; padding-left: 88px; }
.method { font-size: 18px; font-weight: 600; }
.tree .method { min-width: 56px; text-align: right; }

/* Tabs */
.main { display: flex; flex-direction: column; background: #212121; }
.tabbar { height: 82px; display: flex; align-items: stretch; border-bottom: 2px solid #303030; color: #a6a6a6; }
.tabs { display: flex; }
.tab {
  width: 192px;
  display: flex;
  align-items: center;
  padding: 0 34px 0 16px;
  background: linear-gradient(#303030, #303030) right center / 2px 32px no-repeat;
  font-size: 22px;
}
.tab > span { display: flex; align-items: center; gap: 7px; overflow: hidden; width: 100%; }
.tab .method { opacity: 0.65; }
.tab.current { color: #fff; padding: 0 18px 0 16px; }
.tab.current span { height: 82px; margin-bottom: -2px; border-bottom: 2px solid #ee7747; gap: 11px; padding: 0 14px 0 2px; }
.tab.current svg { color: #a6a6a6; }
.tab.current i { overflow: hidden; }
.tab-add { margin-left: 28px; }
.tab-list { margin-left: 47px; }
.environment { flex: 1; display: flex; align-items: center; margin-left: 31px; padding: 0 30px; border-left: 2px solid #303030; }
.env-select { flex: 1; display: flex; align-items: center; gap: 17px; padding-right: 35px; border-right: 2px solid #6b6b6b; font-size: 22px; }
.env-select span { flex: 1; text-align: left; }
.env-view { margin-left: 32px; }

/* Run results */
.results-head { height: 64px; display: flex; align-items: center; margin-top: 16px; padding: 0 46px 0 32px; color: #a6a6a6; }
.results-head h1 { flex: 1; color: #fff; font-size: 28px; font-weight: 600; line-height: 36px; padding-top: 8px; }
.run-again { height: 64px; width: 166px; border-radius: 8px; background: #ee7747; color: #fff; font-weight: 600; }
.text-btn { display: flex; align-items: center; }
.automate { gap: 12px; margin-left: 40px; }
.new-run { gap: 16px; margin-left: 58px; }
.export { gap: 14px; margin-left: 33px; }
.ran { display: flex; align-items: center; margin: 12px 0 20px 32px; color: #a6a6a6; }
.ran-avatar {
  width: 32px;
  height: 32px;
  display: flex;
  align-items: center;
  justify-content: center;
  margin-right: 8px;
  border-radius: 50%;
  background: #303030;
}
.dot { margin: 0 16px; }
a { color: #a6a6a6; text-decoration: underline; text-decoration-thickness: 2px; text-underline-offset: 4px; }
.metrics {
  display: flex;
  gap: 128px;
  margin: 0 32px;
  padding: 20px 16px;
  background: #262626;
  color: #a6a6a6;
}
.metrics dd { margin-top: 16px; font-size: 28px; font-weight: 600; }
.summary-head { height: 81px; display: flex; align-items: center; justify-content: space-between; padding: 16px 46px 0 32px; }
.summary-head h3 { color: #6b6b6b; font-size: 22px; font-weight: 400; }
.summary { width: 100%; table-layout: fixed; border-collapse: separate; border-spacing: 0; border-top: 2px solid #303030; border-bottom: 2px solid #303030; }
.summary td, .summary th { padding: 0; height: 64px; }
.summary thead td:first-child { width: 50%; }
.summary thead th { height: 72px; width: 49px; vertical-align: top; padding-top: 16px; }
.iter { background: #373737; font-weight: 400; color: #a6a6a6; }
.iter span { display: block; width: 40px; margin: 0 auto; padding: 4px 0; border-radius: 6px; background: #2b2b2b; }
.ok { height: 48px; background: #2d4a2f; }
.request { display: flex; align-items: center; padding: 0 18px 0 44px; }
.request b { margin-right: 24px; font-size: 20px; font-weight: 600; }
.caret { margin-right: 26px; border: solid transparent; border-width: 8px 0 8px 10px; border-left-color: #a6a6a6; }
.pass { margin-left: auto; padding-right: 8px; border-right: 2px solid #6b6b6b; color: #59c268; font-weight: 600; }
.fail { padding-left: 8px; color: #6b6b6b; }

/* Status bar */
.statusbar {
  height: 48px;
  display: flex;
  justify-content: space-between;
  align-items: center;
  border-top: 2px solid #303030;
  padding: 2px 15px 0 10px;
  color: #a6a6a6;
  font-size: 22px;
}
.foot-left, .foot-right { display: flex; align-items: center; gap: 24px; }
.foot-right { gap: 33px; }
.toggle { margin-right: 4px; }
.statusbar button { display: flex; align-items: center; gap: 8px; }
.foot-right button { gap: 9px; }
.postbot { color: #b69ddc; }

/* Dock */
.desktop {
  position: relative;
  display: flex;
  justify-content: center;
  padding-bottom: 10px;
  background:
    linear-gradient(90deg, transparent 22.5%, #5a1420 24%, #d03a30 29%, #6c4440 32%, #173a3c 33%, #64c8c0 37%, #123e58 42%, #000c50 46%, #000068 51%, #000 53.500%, #000 56%, #305a34 57.500%, #33603a 60%, #30001a 62.500%, #000 66%, #000 76%, #4a1a6a 78.800%, #c08ad8 79.500%, #b244e4 82.500%, #5a1a86 83.500%, #1c0840 88%, transparent 92%) bottom / 100% 20px no-repeat,
    #000026;
}
.wallpaper { position: absolute; inset: 0; width: 100%; height: 100%; }
.dock {
  position: relative;
  height: 156px;
  display: flex;
  align-items: flex-start;
  gap: 32px;
  padding: 20px 17px 0 19px;
  border: 2px solid rgba(255, 255, 255, 0.22);
  border-radius: 44px;
  background: linear-gradient(90deg, #141236 0, #151238 10%, #281232 15%, #481c20 19%, #5e2523 23%, #4c3a34 26%, #2f6864 31%, #2d6a68 34%, #1a2c52 39%, #151a50 45%, #14163e 49%, #15151f 52.500%, #22381e 57%, #22361f 60%, #21141f 65%, #1c1526 72%, #38146a 77%, #5a2080 81%, #7c2c86 85%, #571f70 88%, #2c1550 92%, #241040 100%);
}
.app { position: relative; width: 102px; height: 102px; }
.app > svg { width: 102px; height: 102px; overflow: visible; }
.running::after {
  content: "";
  position: absolute;
  left: 47px;
  bottom: -28px;
  width: 8px;
  height: 8px;
  border-radius: 50%;
  background: rgba(230, 225, 245, 0.65);
}
.badge {
  position: absolute;
  top: -13px;
  right: -15px;
  width: 58px;
  height: 48px;
  border-radius: 24px;
  background: rgba(232, 80, 66, 0.95);
  color: #fff;
  line-height: 48px;
  text-align: center;
}
.dock-sep { width: 2px; height: 116px; margin: -2px 14px 0; background: rgba(255, 255, 255, 0.3); }
.glyph { font: 700 28px "Open Sans", Inter, sans-serif; fill: #fff; }
.aa { font: 48px "Liberation Serif", serif; fill: #f4f0f0; }
```
